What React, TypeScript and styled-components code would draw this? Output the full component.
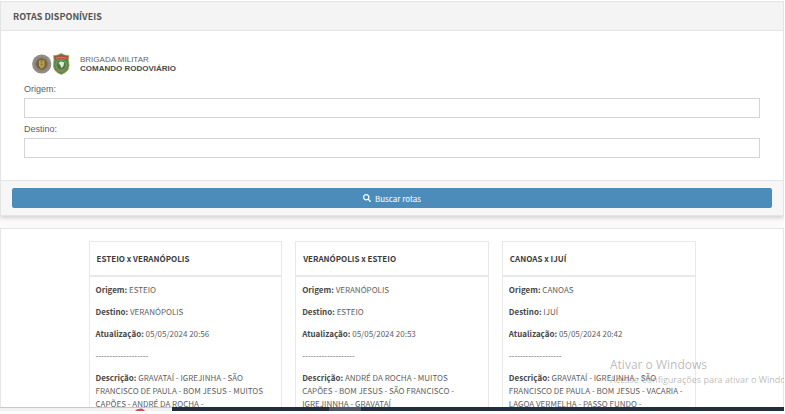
import React from "react";
import styled, { createGlobalStyle } from "styled-components";
import { FaSearch } from "react-icons/fa";

const GlobalStyle = createGlobalStyle`
  *, *::before, *::after { box-sizing: border-box; }
  body {
    margin: 0;
    background: #fff;
    color: #606060;
    font-family: "Noto Sans CJK SC", "Noto Sans", sans-serif;
    font-size: 8px;
    line-height: 13px;
  }
`;

const Screen = styled.div`
  display: flex;
  flex-direction: column;
  height: 100vh;
  padding: 1px 1px 3px 0;
  overflow: hidden;
`;

const Page = styled.main`
  position: relative;
  flex: 1;
  min-height: 0;
  overflow: hidden;
  background: #fbf9fa;
`;

const Panel = styled.form`
  background: #fff;
  border: 1px solid #e4e4e4;
  box-shadow: 0 2px 4px rgba(0, 0, 0, 0.16);
  margin-bottom: 12px;
`;

const PanelHeader = styled.header`
  padding: 8px 12px 7px;
  background: #f4f4f4;
  border-bottom: 1px solid #e4e4e4;
`;

const PanelTitle = styled.h1`
  margin: 0;
  font-size: 9px;
  line-height: 13px;
  font-weight: 700;
  color: #555;
`;

const PanelBody = styled.div`
  padding: 22px 23px 17px;
`;

const PanelFooter = styled.footer`
  padding: 7px 11px;
  background: #f6f6f7;
  border-top: 1px solid #e4e4e4;
`;

const Brand = styled.div`
  display: flex;
  align-items: center;
  gap: 10px;
  padding-left: 8px;
  margin-bottom: 8px;
`;

const BrandText = styled.div`
  font-family: "Liberation Sans", Arial, sans-serif;
  font-size: 8px;
  line-height: 9px;
  color: #666;

  strong {
    display: block;
    color: #4a4a4a;
  }
`;

const Field = styled.div`
  margin-bottom: 5px;
  font-family: "Liberation Sans", Arial, sans-serif;
  font-size: 9px;
`;

const FieldLabel = styled.label`
  display: block;
  line-height: 12px;
  margin-bottom: 3px;
`;

const TextInput = styled.input`
  display: block;
  width: 100%;
  height: 20px;
  padding: 2px 6px;
  border: 1px solid #d6d6d6;
  border-radius: 0;
  background: #fff;
  font: inherit;
  color: inherit;
`;

const SearchButton = styled.button`
  display: flex;
  align-items: center;
  justify-content: center;
  gap: 4px;
  width: 100%;
  height: 20px;
  padding: 0;
  border: 0;
  border-radius: 2px;
  background: #4c8cbb;
  color: #fff;
  font: inherit;
`;

const Results = styled.section`
  min-height: 240px;
  padding: 12px;
  background: #fff;
  border: 1px solid #e6e6e6;
`;

const CardGrid = styled.div`
  display: grid;
  grid-template-columns: repeat(3, minmax(0, 1fr));
  gap: 13px;
  max-width: 607px;
  margin: 0 auto;
`;

const Card = styled.article`
  border: 1px solid #e9e9e9;
  background: #fff;
`;

const CardTitle = styled.h2`
  margin: 0;
  padding: 10px 7px;
  border-bottom: 2px solid #e9e9e9;
  font-size: 8px;
  line-height: 13px;
  font-weight: 700;
  color: #3c3c3c;
`;

const CardBody = styled.div`
  padding: 6px;

  p {
    margin: 0 0 9px;
  }

  strong {
    color: #484848;
  }
`;

const Watermark = styled.aside`
  position: absolute;
  right: 0;
  bottom: 20px;
  width: 174px;
  overflow: hidden;
  white-space: nowrap;
  pointer-events: none;
  font-family: "Open Sans", sans-serif;
  color: rgba(130, 130, 130, 0.55);
`;

const WatermarkTitle = styled.div`
  font-size: 12px;
  line-height: 16px;
`;

const WatermarkText = styled.div`
  font-size: 9px;
  line-height: 14px;
`;

const Taskbar = styled.footer`
  display: flex;
  flex: none;
  height: 4px;
  background: #222d40;
`;

const TaskSearch = styled.div`
  display: flex;
  justify-content: flex-end;
  width: 22%;
  padding-right: 26px;
  background: #f1f1f1;
  border-top: 1px solid #c8c8c8;
`;

const ActiveTask = styled.div`
  width: 4%;
  margin-left: 20%;
  background: #4a5566;
`;

function CrestIcons() {
  return (
    <svg width="38" height="22" viewBox="0 0 38 22" aria-hidden="true">
      <circle cx="9.7" cy="11" r="9.6" fill="#8b877c" />
      <circle cx="9.7" cy="11" r="8.2" fill="none" stroke="#aaa392" strokeWidth="1" strokeDasharray="1 1" />
      <circle cx="9.7" cy="11" r="5.8" fill="#75624a" />
      <path d="M7 7.5h5.4v4.8q0 2-2.7 3.2Q7 14.3 7 12.3Z" fill="#c5a638" />
      <path d="M8.3 9h2.800M8.3 11.500h2.800M9.700 8v6" stroke="#8f7631" strokeWidth=".8" />
      <path d="M21.500 2.500Q25 2.800 29.200.5 33.500 2.800 37 2.500L36.400 7Q38 13 36 17 33.500 20 29.200 21.500 25 20 22.500 17 20.500 13 22 7Z" fill="#54894f" stroke="#a7ac67" strokeWidth=".7" />
      <path d="M22.300 3.300Q25.500 3.400 29.200 1.500 33 3.400 36.200 3.300L35.700 6.700Q29 4.800 22.800 6.700Z" fill="#b64c3e" />
      <path d="M24 5.200Q29 3.500 34.500 5.200" fill="none" stroke="#dda88f" strokeWidth=".6" />
      <circle cx="29.200" cy="12" r="5.200" fill="#477c49" stroke="#a0a75f" strokeWidth=".8" />
      <path d="M26.500 10 29 8.200 32.300 9.500 31.600 12.500 29.600 15.200 28.500 12.600Z" fill="#e3e8d5" />
      <path d="M24.500 17.200Q29 20 34 17.200" fill="none" stroke="#c46a46" strokeWidth="1.300" />
    </svg>
  );
}

const routes = [
  {
    origin: "ESTEIO",
    destination: "VERANÓPOLIS",
    updated: "05/05/2024 20:56",
    description: ["GRAVATAÍ - IGREJINHA - SÃO", "FRANCISCO DE PAULA - BOM JESUS - MUITOS", "CAPÕES - ANDRÉ DA ROCHA -"],
  },
  {
    origin: "VERANÓPOLIS",
    destination: "ESTEIO",
    updated: "05/05/2024 20:53",
    description: ["ANDRÉ DA ROCHA - MUITOS", "CAPÕES - BOM JESUS - SÃO FRANCISCO -", "IGREJINNHA - GRAVATAÍ"],
  },
  {
    origin: "CANOAS",
    destination: "IJUÍ",
    updated: "05/05/2024 20:42",
    description: ["GRAVATAÍ - IGREJINHA - SÃO", "FRANCISCO DE PAULA - BOM JESUS - VACARIA -", "LAGOA VERMELHA - PASSO FUNDO -"],
  },
];

export default function App() {
  return (
    <>
      <GlobalStyle />
      <Screen>
        <Page>
          <Panel onSubmit={(e) => e.preventDefault()}>
            <PanelHeader>
              <PanelTitle>ROTAS DISPONÍVEIS</PanelTitle>
            </PanelHeader>
            <PanelBody>
              <Brand>
                <CrestIcons />
                <BrandText>
                  BRIGADA MILITAR
                  <strong>COMANDO RODOVIÁRIO</strong>
                </BrandText>
              </Brand>
              <Field>
                <FieldLabel htmlFor="origem">Origem:</FieldLabel>
                <TextInput id="origem" type="text" />
              </Field>
              <Field>
                <FieldLabel htmlFor="destino">Destino:</FieldLabel>
                <TextInput id="destino" type="text" />
              </Field>
            </PanelBody>
            <PanelFooter>
              <SearchButton type="submit">
                <FaSearch size={8} aria-hidden="true" />
                Buscar rotas
              </SearchButton>
            </PanelFooter>
          </Panel>
          <Results>
            <CardGrid>
              {routes.map((route) => (
                <Card key={route.updated}>
                  <CardTitle>
                    {route.origin} x {route.destination}
                  </CardTitle>
                  <CardBody>
                    <p><strong>Origem:</strong> {route.origin}</p>
                    <p><strong>Destino:</strong> {route.destination}</p>
                    <p><strong>Atualização:</strong> {route.updated}</p>
                    <p>-------------------</p>
                    <p>
                      <strong>Descrição:</strong>{" "}
                      {route.description.map((line) => (
                        <React.Fragment key={line}>
                          {line}
                          <br />
                        </React.Fragment>
                      ))}
                    </p>
                  </CardBody>
                </Card>
              ))}
            </CardGrid>
          </Results>
          <Watermark>
            <WatermarkTitle>Ativar o Windows</WatermarkTitle>
            <WatermarkText>Acesse Configurações para ativar o Windows.</WatermarkText>
          </Watermark>
        </Page>
        <Taskbar>
          <TaskSearch>
            <svg width="12" height="3" viewBox="0 0 12 3" aria-hidden="true">
              <path d="M1 3Q3 .5 5 1 8-.5 11 3Z" fill="#c9505a" />
            </svg>
          </TaskSearch>
          <ActiveTask />
        </Taskbar>
      </Screen>
    </>
  );
}
